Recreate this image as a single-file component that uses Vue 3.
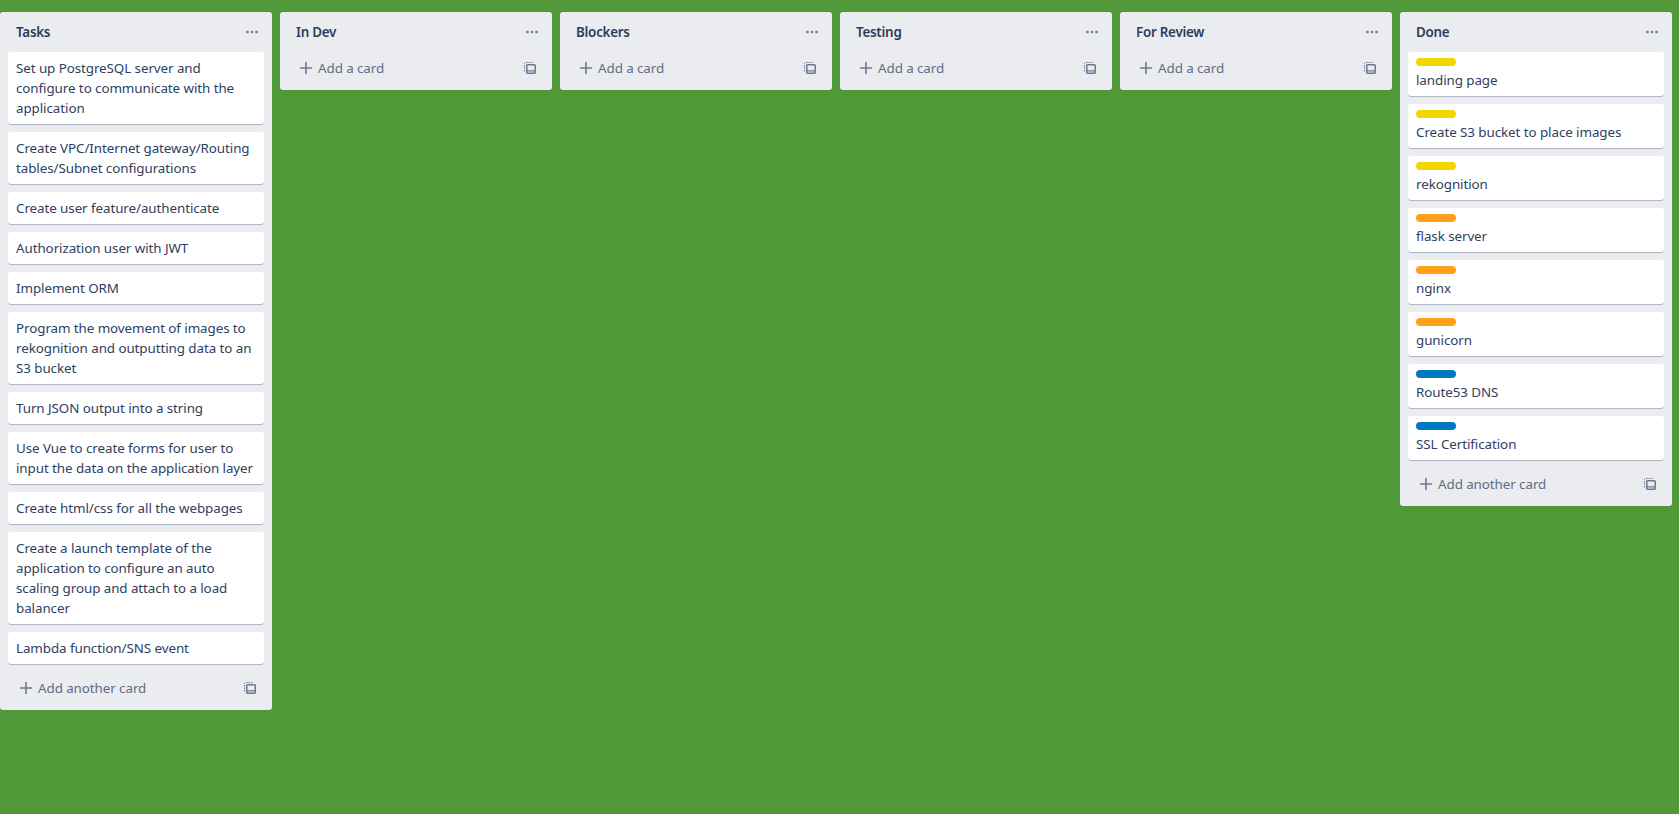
<template>
  <div class="board">
    <div v-for="list in lists" :key="list.title" class="list">
      <div class="list-header">
        <span class="list-title">{{ list.title }}</span>
        <svg class="menu-icon" width="12" height="12" viewBox="0 0 12 12">
          <circle cx="1.500" cy="6" r="1.300" />
          <circle cx="6" cy="6" r="1.300" />
          <circle cx="10.500" cy="6" r="1.300" />
        </svg>
      </div>

      <div v-if="list.cards.length" class="cards">
        <div v-for="card in list.cards" :key="card.text" class="card">
          <div v-if="card.label" class="label" :class="card.label"></div>
          <div class="card-text">{{ card.text }}</div>
        </div>
      </div>

      <div class="composer">
        <svg class="plus-icon" width="12" height="12" viewBox="0 0 12 12">
          <path d="M5.200 0h1.600v5.200H12v1.600H6.800V12H5.200V6.800H0V5.200h5.200z" />
        </svg>
        <span class="add-text">{{ list.cards.length ? 'Add another card' : 'Add a card' }}</span>
        <svg class="template-icon" width="12" height="12" viewBox="0 0 12 12">
          <path class="dashed" d="M0.500 9.500V1.500a1 1 0 0 1 1-1h8" />
          <path d="M3.500 2h7A1.500 1.500 0 0 1 12 3.500v7a1.500 1.500 0 0 1-1.500 1.500h-7A1.500 1.500 0 0 1 2 10.500v-7A1.500 1.500 0 0 1 3.500 2zM3.500 3.500v4.800h7V3.500zM3.500 9.500v1h7v-1z" fill-rule="evenodd" />
        </svg>
      </div>
    </div>
  </div>
</template>

<script setup>
const lists = [
  {
    title: 'Tasks',
    cards: [
      { text: 'Set up PostgreSQL server and configure to communicate with the application' },
      { text: 'Create VPC/Internet gateway/Routing tables/Subnet configurations' },
      { text: 'Create user feature/authenticate' },
      { text: 'Authorization user with JWT' },
      { text: 'Implement ORM' },
      { text: 'Program the movement of images to rekognition and outputting data to an S3 bucket' },
      { text: 'Turn JSON output into a string' },
      { text: 'Use Vue to create forms for user to input the data on the application layer' },
      { text: 'Create html/css for all the webpages' },
      { text: 'Create a launch template of the application to configure an auto scaling group and attach to a load balancer' },
      { text: 'Lambda function/SNS event' }
    ]
  },
  { title: 'In Dev', cards: [] },
  { title: 'Blockers', cards: [] },
  { title: 'Testing', cards: [] },
  { title: 'For Review', cards: [] },
  {
    title: 'Done',
    cards: [
      { text: 'landing page', label: 'yellow' },
      { text: 'Create S3 bucket to place images', label: 'yellow' },
      { text: 'rekognition', label: 'yellow' },
      { text: 'flask server', label: 'orange' },
      { text: 'nginx', label: 'orange' },
      { text: 'gunicorn', label: 'orange' },
      { text: 'Route53 DNS', label: 'blue' },
      { text: 'SSL Certification', label: 'blue' }
    ]
  }
];
</script>

<style scoped>
.board {
  display: flex;
  align-items: flex-start;
  gap: 8px;
  min-height: 814px;
  box-sizing: border-box;
  padding-top: 12px;
  background-color: #519839;
  font-family: "Noto Sans", "Open Sans", sans-serif;
  font-size: 13.4px;
  letter-spacing: -0.08px;
  line-height: 20px;
  color: #2f4060;
}

.list {
  flex: 0 0 272px;
  background-color: #ebecf0;
  border-radius: 3px;
}

.list-header {
  display: flex;
  align-items: center;
  justify-content: space-between;
  height: 40px;
  padding: 0 14px 0 16px;
  box-sizing: border-box;
}

.list-title {
  font-weight: 600;
  letter-spacing: -0.25px;
  color: #2b3c5c;
}

.menu-icon {
  fill: #6b778c;
}

.cards {
  display: flex;
  flex-direction: column;
  gap: 8px;
  padding: 0 8px;
  margin-bottom: 8px;
}

.card {
  background-color: #fff;
  border-radius: 3px;
  box-shadow: 0 1px 0 rgba(9, 30, 66, 0.25);
  padding: 6px 8px;
}

.label {
  width: 40px;
  height: 8px;
  border-radius: 4px;
  margin-bottom: 4px;
}

.yellow {
  background-color: #f2d600;
}

.orange {
  background-color: #ff9f1a;
}

.blue {
  background-color: #0079bf;
}

.composer {
  display: flex;
  align-items: center;
  height: 38px;
  padding: 0 16px 6px 20px;
  box-sizing: border-box;
  color: #5e6c84;
}

.plus-icon {
  fill: #6b778c;
  margin-right: 6px;
}

.add-text {
  flex: 1;
}

.template-icon {
  fill: #6b778c;
}

.dashed {
  fill: none;
  stroke: #6b778c;
  stroke-width: 1;
  stroke-dasharray: 1.500 1;
}
</style>

<style>
body {
  background-color: #519839;
}
</style>
